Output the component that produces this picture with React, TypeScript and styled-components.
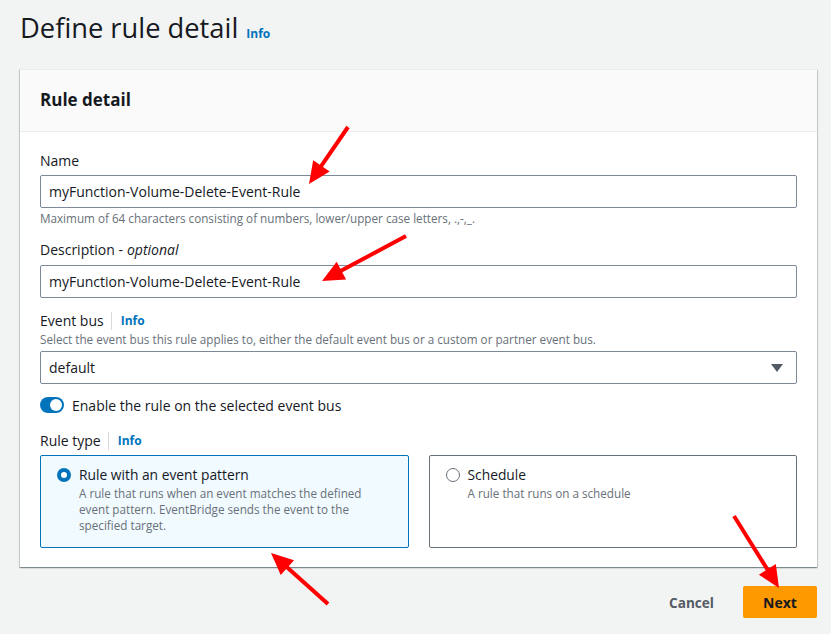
import React from "react";
import styled, { createGlobalStyle } from "styled-components";

const GlobalStyle = createGlobalStyle`
  html, body { margin: 0; padding: 0; background: #f2f3f3; }
  body { font-family: "Open Sans", "Noto Sans", Arial, sans-serif; color: #16191f; }
  * { box-sizing: border-box; }
`;

const Page = styled.div`
  position: relative;
  width: 831px;
  height: 634px;
  padding: 10px 14px 0 20px;
  display: flex;
  flex-direction: column;
  overflow: hidden;
`;

const TitleRow = styled.div`
  display: flex;
  align-items: baseline;
  gap: 8px;
`;

const Title = styled.h1`
  margin: 0;
  font-size: 27.3px;
  font-weight: 400;
  line-height: 36px;
  color: #16191f;
`;

const InfoLink = styled.span`
  font-size: 12px;
  font-weight: 700;
  color: #0073bb;
`;

const Card = styled.section`
  margin-top: 23px;
  background: #fff;
  border-top: 1px solid #eaeded;
  box-shadow: 0 1px 1px 0 rgba(0, 28, 36, 0.3), 1px 1px 1px 0 rgba(0, 28, 36, 0.15),
    -1px 1px 1px 0 rgba(0, 28, 36, 0.15);
`;

const CardHeader = styled.div`
  height: 62px;
  padding: 0 20px;
  display: flex;
  align-items: center;
  background: #fafafa;
  border-bottom: 1px solid #eaeded;
`;

const CardTitle = styled.h2`
  margin: 0;
  font-size: 17px;
  font-weight: 700;
  line-height: 22px;
  padding-bottom: 2px;
`;

const CardBody = styled.div`
  padding: 19px 20px 19px 20px;
  display: flex;
  flex-direction: column;
`;

const Field = styled.div<{ $top?: number }>`
  display: flex;
  flex-direction: column;
  margin-top: ${(p) => p.$top ?? 0}px;
`;

const LabelRow = styled.div`
  display: flex;
  align-items: center;
  height: 20px;
  font-size: 14px;
  line-height: 20px;
  color: #16191f;
`;

const Optional = styled.i`
  font-style: italic;
  margin-left: 4px;
`;

const Divider = styled.span`
  width: 1px;
  height: 18px;
  background: #d5dbdb;
  margin: 0 9px 0 7px;
`;

const Hint = styled.div<{ $top?: number }>`
  font-size: 11.7px;
  line-height: 16px;
  color: #687078;
  margin-top: ${(p) => p.$top ?? 0}px;
`;

const Input = styled.div<{ $top?: number }>`
  margin-top: ${(p) => p.$top ?? 4}px;
  height: 33px;
  border: 1px solid #7d8998;
  border-radius: 2px;
  background: #fff;
  padding: 0 9px 0 8px;
  display: flex;
  align-items: center;
  justify-content: space-between;
  font-size: 14px;
  color: #16191f;
`;

const Caret = styled.span`
  width: 0;
  height: 0;
  border-left: 6px solid transparent;
  border-right: 6px solid transparent;
  border-top: 8px solid #545b64;
  margin-right: 4px;
`;

const ToggleRow = styled.div`
  margin-top: 11px;
  display: flex;
  align-items: center;
  gap: 8px;
  height: 20px;
  font-size: 14px;
`;

const Toggle = styled.span`
  position: relative;
  width: 24px;
  height: 16px;
  border-radius: 8px;
  background: #0073bb;
  &::after {
    content: "";
    position: absolute;
    top: 2px;
    right: 2px;
    width: 12px;
    height: 12px;
    border-radius: 50%;
    background: #fff;
  }
`;

const Tiles = styled.div`
  margin-top: 4px;
  display: grid;
  grid-template-columns: 1fr 1fr;
  gap: 20px;
`;

const Tile = styled.div<{ $selected?: boolean }>`
  height: 93px;
  border: 1px solid ${(p) => (p.$selected ? "#0073bb" : "#687078")};
  background: ${(p) => (p.$selected ? "#f1faff" : "#fff")};
  border-radius: 2px;
  padding: 9px 16px;
  display: flex;
  gap: 8px;
`;

const Radio = styled.span<{ $checked?: boolean }>`
  flex: none;
  margin-top: 3px;
  width: 14px;
  height: 14px;
  border-radius: 50%;
  background: #fff;
  border: ${(p) => (p.$checked ? "4px solid #0073bb" : "1px solid #687078")};
`;

const TileText = styled.div`
  display: flex;
  flex-direction: column;
`;

const TileTitle = styled.div`
  font-size: 13.8px;
  line-height: 20px;
  color: #16191f;
`;

const TileDesc = styled.div`
  font-size: 11.7px;
  line-height: 16px;
  color: #687078;
`;

const Footer = styled.div`
  margin-top: 19px;
  display: flex;
  justify-content: flex-end;
  align-items: center;
  gap: 29px;
`;

const TextButton = styled.span`
  font-size: 13.6px;
  font-weight: 700;
  color: #545b64;
`;

const PrimaryButton = styled.span`
  width: 74px;
  height: 32px;
  display: flex;
  align-items: center;
  justify-content: center;
  background: #ff9900;
  border-radius: 2px;
  font-size: 14px;
  font-weight: 700;
  color: #16191f;
`;

const Overlay = styled.svg`
  position: absolute;
  left: 0;
  top: 0;
  pointer-events: none;
`;

const arrows: [number, number, number, number][] = [
  [348, 127, 309, 184],
  [406, 236, 322, 281],
  [328, 604, 271, 553],
  [734, 516, 779, 588],
];

function Arrow({ x1, y1, x2, y2 }: { x1: number; y1: number; x2: number; y2: number }) {
  const dx = x2 - x1;
  const dy = y2 - y1;
  const len = Math.hypot(dx, dy);
  const ux = dx / len;
  const uy = dy / len;
  const headLen = 22;
  const headW = 10;
  const bx = x2 - ux * headLen;
  const by = y2 - uy * headLen;
  const px = -uy;
  const py = ux;
  const pts = `${x2},${y2} ${bx + px * headW},${by + py * headW} ${bx - px * headW},${by - py * headW}`;
  return (
    <g>
      <line x1={x1} y1={y1} x2={bx + ux * 2} y2={by + uy * 2} stroke="#ff0000" strokeWidth={4} />
      <polygon points={pts} fill="#ff0000" />
    </g>
  );
}

export default function App() {
  return (
    <>
      <GlobalStyle />
      <Page>
        <TitleRow>
          <Title>Define rule detail</Title>
          <InfoLink>Info</InfoLink>
        </TitleRow>
        <Card>
          <CardHeader>
            <CardTitle>Rule detail</CardTitle>
          </CardHeader>
          <CardBody>
            <Field>
              <LabelRow>Name</LabelRow>
              <Input>myFunction-Volume-Delete-Event-Rule</Input>
              <Hint $top={2}>
                Maximum of 64 characters consisting of numbers, lower/upper case letters, .,-,_.
              </Hint>
            </Field>
            <Field $top={14}>
              <LabelRow>
                Description -<Optional>optional</Optional>
              </LabelRow>
              <Input $top={5}>myFunction-Volume-Delete-Event-Rule</Input>
            </Field>
            <Field $top={13}>
              <LabelRow>
                Event bus
                <Divider />
                <InfoLink>Info</InfoLink>
              </LabelRow>
              <Hint>
                Select the event bus this rule applies to, either the default event bus or a custom or partner event bus.
              </Hint>
              <Input>
                default
                <Caret />
              </Input>
            </Field>
            <ToggleRow>
              <Toggle />
              Enable the rule on the selected event bus
            </ToggleRow>
            <Field $top={16}>
              <LabelRow>
                Rule type
                <Divider />
                <InfoLink>Info</InfoLink>
              </LabelRow>
              <Tiles>
                <Tile $selected>
                  <Radio $checked />
                  <TileText>
                    <TileTitle>Rule with an event pattern</TileTitle>
                    <TileDesc>
                      A rule that runs when an event matches the defined
                      <br />
                      event pattern. EventBridge sends the event to the
                      <br />
                      specified target.
                    </TileDesc>
                  </TileText>
                </Tile>
                <Tile>
                  <Radio />
                  <TileText>
                    <TileTitle>Schedule</TileTitle>
                    <TileDesc>A rule that runs on a schedule</TileDesc>
                  </TileText>
                </Tile>
              </Tiles>
            </Field>
          </CardBody>
        </Card>
        <Footer>
          <TextButton>Cancel</TextButton>
          <PrimaryButton>Next</PrimaryButton>
        </Footer>
        <Overlay width={831} height={634} viewBox="0 0 831 634">
          {arrows.map(([a, b, c, d], i) => (
            <Arrow key={i} x1={a} y1={b} x2={c} y2={d} />
          ))}
        </Overlay>
      </Page>
    </>
  );
}
